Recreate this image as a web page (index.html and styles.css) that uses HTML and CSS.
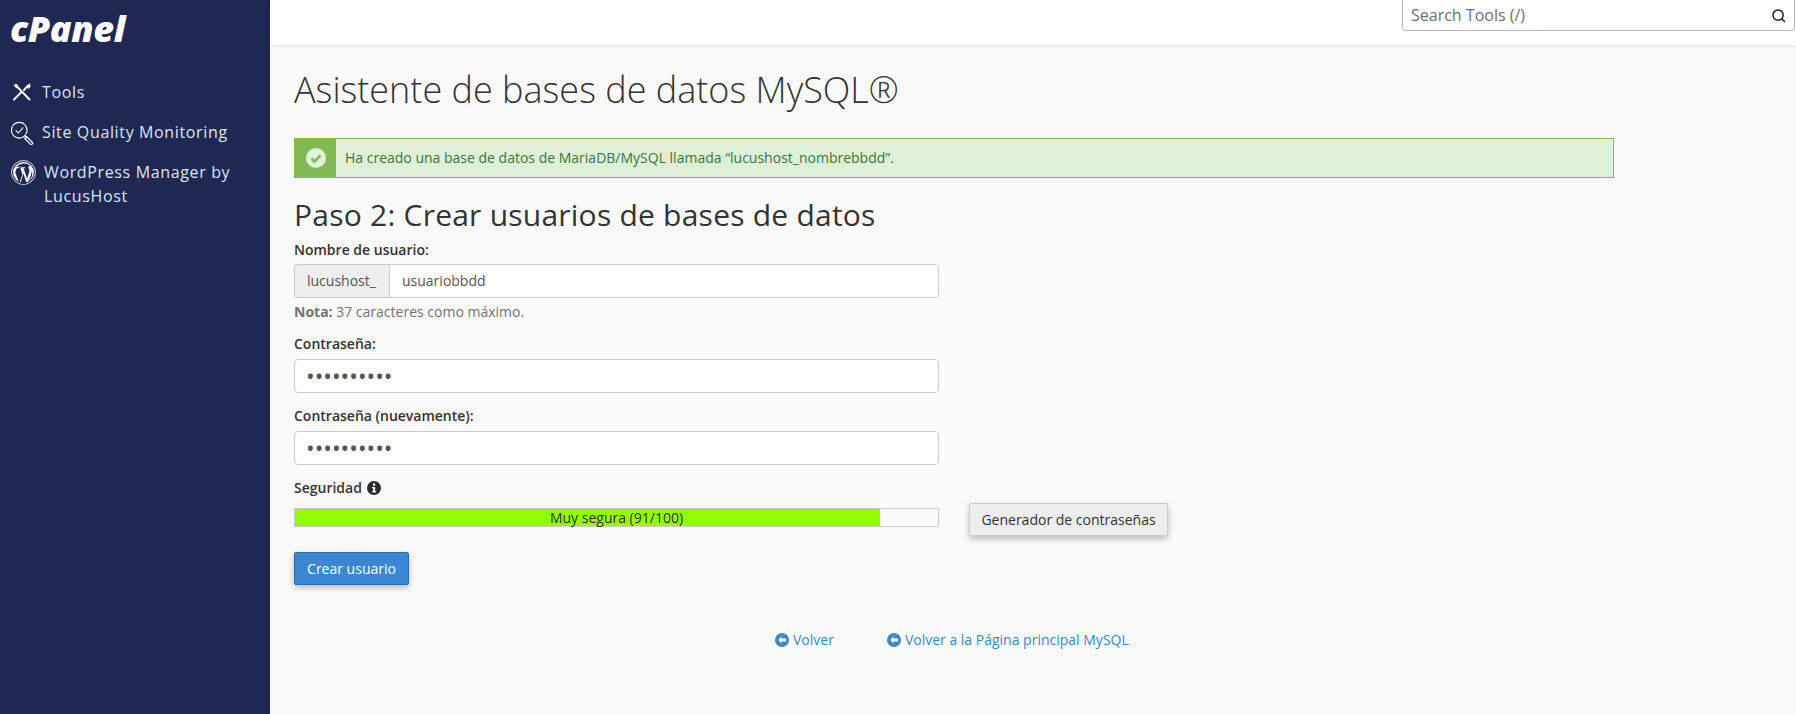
FILE: index.html
```html
<!DOCTYPE html>
<html lang="es">
<head>
<meta charset="utf-8">
<title>Asistente de bases de datos MySQL</title>
<link rel="stylesheet" href="styles.css">
</head>
<body>
<aside class="sidebar">
  <div class="logo">cPanel</div>
  <nav class="nav">
    <a class="nav-item nav-tools">
      <svg class="nav-icon" viewBox="0 0 20 20" fill="none" stroke="#fff" stroke-width="1.900" stroke-linecap="round"><path d="M5 4.500l12.500 13"/><path d="M2 17.500l7-7"/><path d="M12 8l4-4.500"/><path d="M1.500 3.200L4 1.500 6.500 4 4.500 6.500z" fill="#fff" stroke="none"/><path d="M14.500 5l3.500-4 .5 3.500L16.500 7z" fill="#fff" stroke="none"/></svg>
      <span>Tools</span>
    </a>
    <a class="nav-item nav-sqm">
      <svg class="nav-icon nav-icon-lg" viewBox="0 0 26 26" fill="none" stroke="#fff" stroke-width="1.200" stroke-linecap="round"><circle cx="10" cy="10" r="8.500"/><path d="M6.500 10.500l2.500 2.500 5-5.500"/><path d="M16 16l2 2"/><path d="M18 17l6 6a1.300 1.300 0 0 1-2 2l-6-6z" stroke-width="1.300"/></svg>
      <span>Site Quality Monitoring</span>
    </a>
    <a class="nav-item nav-wp">
      <svg class="nav-icon nav-icon-wp" viewBox="0 0 24 24"><circle cx="12" cy="12" r="11.500" fill="none" stroke="#fff" stroke-width="0.800"/><circle cx="12" cy="12" r="10" fill="#fff"/><path d="M4 12l4 10 3-8-2-6H7.500V7h6v1h-1.500l3.500 10 2-6.500c.6-2-.4-3-.7-4-.3-1 .3-2 1.700-2A10 10 0 0 0 5 6.500h3.500L10 8H5.500zM12 13l-3 9.500a10 10 0 0 0 6 0zM19.500 9c.8 3 0 5-3 12a10 10 0 0 0 3-12z" fill="#1f2753"/></svg>
      <span>WordPress Manager by LucusHost</span>
    </a>
  </nav>
</aside>
<div class="main">
  <header class="topbar">
    <div class="search">
      <span class="search-text">Search Tools (/)</span>
      <svg class="search-icon" viewBox="0 0 16 16" fill="none" stroke="#16222e" stroke-width="1.600" stroke-linecap="round"><circle cx="7.500" cy="7.500" r="5.500"/><path d="M11.500 11.500l3 3"/></svg>
    </div>
  </header>
  <main class="content">
    <h1 class="title">Asistente de bases de datos MySQL®</h1>
    <div class="alert">
      <div class="alert-icon">
        <svg viewBox="0 0 20 20" class="alert-svg"><circle cx="10" cy="10" r="10" fill="#e0f2d8"/><path d="M5.500 10.500l3 3 6-6" fill="none" stroke="#82b955" stroke-width="2.800"/></svg>
      </div>
      <div class="alert-body">Ha creado una base de datos de MariaDB/MySQL llamada “lucushost_nombrebbdd”.</div>
    </div>
    <h2 class="step">Paso 2: Crear usuarios de bases de datos</h2>
    <form class="form">
      <label class="label">Nombre de usuario:</label>
      <div class="input-group">
        <span class="addon">lucushost_</span>
        <span class="field field-joined">usuariobbdd</span>
      </div>
      <p class="note"><b>Nota:</b> 37 caracteres como máximo.</p>
      <label class="label label-pass">Contraseña:</label>
      <div class="field field-pass">••••••••••</div>
      <label class="label label-again">Contraseña (nuevamente):</label>
      <div class="field field-pass">••••••••••</div>
      <div class="label label-sec">Seguridad
        <svg class="info" viewBox="0 0 14 14"><circle cx="7" cy="7" r="7" fill="#2b2b2b"/><rect x="6" y="2.500" width="2.200" height="2.200" fill="#fafafa"/><path d="M5 6h3.200v4.200h1v1.300H5v-1.300h1V7.300H5z" fill="#fafafa"/></svg>
      </div>
      <div class="strength-row">
        <div class="meter">
          <div class="meter-fill" style="width:91%"></div>
          <div class="meter-text">Muy segura (91/100)</div>
        </div>
        <button type="button" class="btn btn-gen">Generador de contraseñas</button>
      </div>
      <button type="button" class="btn btn-primary">Crear usuario</button>
    </form>
    <div class="links">
      <a class="link"><svg class="back" viewBox="0 0 14 14"><circle cx="7" cy="7" r="7" fill="#3d87ce"/><path d="M7 3.200L3.200 7 7 10.800V8.500h4v-3H7z" fill="#fafafa"/></svg>Volver</a>
      <a class="link"><svg class="back" viewBox="0 0 14 14"><circle cx="7" cy="7" r="7" fill="#3d87ce"/><path d="M7 3.200L3.200 7 7 10.800V8.500h4v-3H7z" fill="#fafafa"/></svg>Volver a la Página principal MySQL</a>
    </div>
  </main>
</div>
</body>
</html>
```
FILE: styles.css
```css
* { box-sizing: border-box; }
html, body { margin: 0; height: 100%; }
body {
  display: flex;
  height: 714px;
  overflow: hidden;
  background: #fafafa;
  color: #333;
  font-family: "Open Sans", sans-serif;
  font-size: 14px;
}
.sidebar {
  width: 270px;
  flex: none;
  background: #1f2753;
  padding: 10px 10px 0;
}
.logo {
  color: #fff;
  font-family: "Open Sans", sans-serif;
  font-weight: 800;
  font-style: italic;
  font-size: 36px;
  line-height: 38px;
  letter-spacing: -0.4px;
  margin-bottom: 24px;
}
.nav { display: flex; flex-direction: column; }
.nav-item {
  display: flex;
  align-items: flex-start;
  color: #dce6f5;
  font-size: 16px;
  line-height: 24px;
  letter-spacing: 0.64px;
  width: 240px;
}
.nav-tools { height: 40px; align-items: center; padding-left: 2px; gap: 10px; }
.nav-sqm { height: 40px; align-items: center; gap: 8px; }
.nav-wp { gap: 8px; margin-top: 8px; }
.nav-icon { width: 20px; height: 20px; flex: none; }
.nav-icon-lg { width: 24px; height: 24px; margin-top: 2px; }
.nav-icon-wp { width: 25px; height: 25px; margin-left: 1px; }
.main { flex: 1; min-width: 0; display: flex; flex-direction: column; }
.topbar {
  height: 45px;
  flex: none;
  background: #fff;
  box-shadow: 0 1px 4px rgba(0, 0, 0, 0.1);
  display: flex;
  justify-content: flex-end;
  align-items: flex-start;
  padding-right: 1px;
}
.search {
  width: 393px;
  height: 31px;
  border: 1px solid #b5b8c8;
  border-top: 0;
  border-radius: 0 0 4px 4px;
  display: flex;
  align-items: center;
  justify-content: space-between;
  padding: 0 8px;
  background: #fff;
}
.search-text { color: #6b7178; font-size: 16px; }
.search-icon { width: 15px; height: 15px; }
.content { padding: 0 0 0 24px; }
.title {
  font-weight: 300;
  font-size: 36px;
  line-height: 44px;
  margin: 23px 0 0;
  color: #333;
}
.alert {
  margin-top: 26px;
  width: 1320px;
  height: 40px;
  display: flex;
  background: #dff0d8;
  border: 1px solid #82b955;
}
.alert-icon {
  width: 41px;
  background: #82b955;
  display: flex;
  align-items: center;
  justify-content: center;
}
.alert-svg { width: 20px; height: 20px; }
.alert-body {
  padding-left: 9px;
  line-height: 38px;
  color: #3c763d;
  font-size: 14px;
}
.step {
  font-weight: 500;
  font-size: 30px;
  line-height: 36px;
  letter-spacing: 0.23px;
  margin: 19px 0 0;
  color: #333;
}
.form { width: 645px; margin-top: 7px; }
.label { display: block; font-weight: 600; line-height: 20px; color: #333; }
.input-group { display: flex; margin-top: 4px; }
.addon {
  width: 95px;
  height: 34px;
  background: #eee;
  border: 1px solid #ccc;
  border-right: 0;
  border-radius: 4px 0 0 4px;
  color: #555;
  line-height: 32px;
  padding-left: 12px;
}
.field {
  display: block;
  height: 34px;
  background: #fff;
  border: 1px solid #ccc;
  border-radius: 4px;
  color: #555;
  line-height: 32px;
  padding-left: 12px;
}
.field-joined { flex: 1; border-radius: 0 4px 4px 0; }
.field-pass { margin-top: 5px; font-size: 23px; padding-left: 11px; }
.note { margin: 4px 0 0; line-height: 20px; color: #737373; }
.label-pass { margin-top: 12px; }
.label-again { margin-top: 13px; }
.label-sec { margin-top: 13px; display: flex; align-items: center; gap: 5px; }
.info { width: 14px; height: 14px; }
.strength-row { position: relative; margin-top: 10px; height: 19px; }
.meter {
  position: relative;
  height: 19px;
  border: 1px solid #ccc;
  background: #fafafa;
}
.meter-fill { height: 100%; background: #91ff00; }
.meter-text {
  position: absolute;
  inset: 0;
  text-align: center;
  line-height: 17px;
  color: #333;
}
.btn {
  font-family: inherit;
  font-size: 14px;
  border-radius: 2px;
  box-shadow: 0 3px 6px rgba(0, 0, 0, 0.25);
  cursor: pointer;
}
.btn-gen {
  position: absolute;
  left: 675px;
  top: -5px;
  width: 199px;
  height: 33px;
  background: #eee;
  border: 1px solid #ccc;
  color: #333;
  padding: 0;
}
.btn-primary {
  display: block;
  margin-top: 25px;
  width: 115px;
  height: 33px;
  background: #3a88d2;
  border: 1px solid #2d6ca8;
  color: #fff;
  padding: 0;
}
.links {
  width: 1320px;
  display: flex;
  gap: 53px;
  margin-top: 45px;
  padding-left: 481px;
}
.link { display: flex; align-items: center; color: #3d87ce; line-height: 20px; gap: 4px; }
.back { width: 14px; height: 14px; }
```
